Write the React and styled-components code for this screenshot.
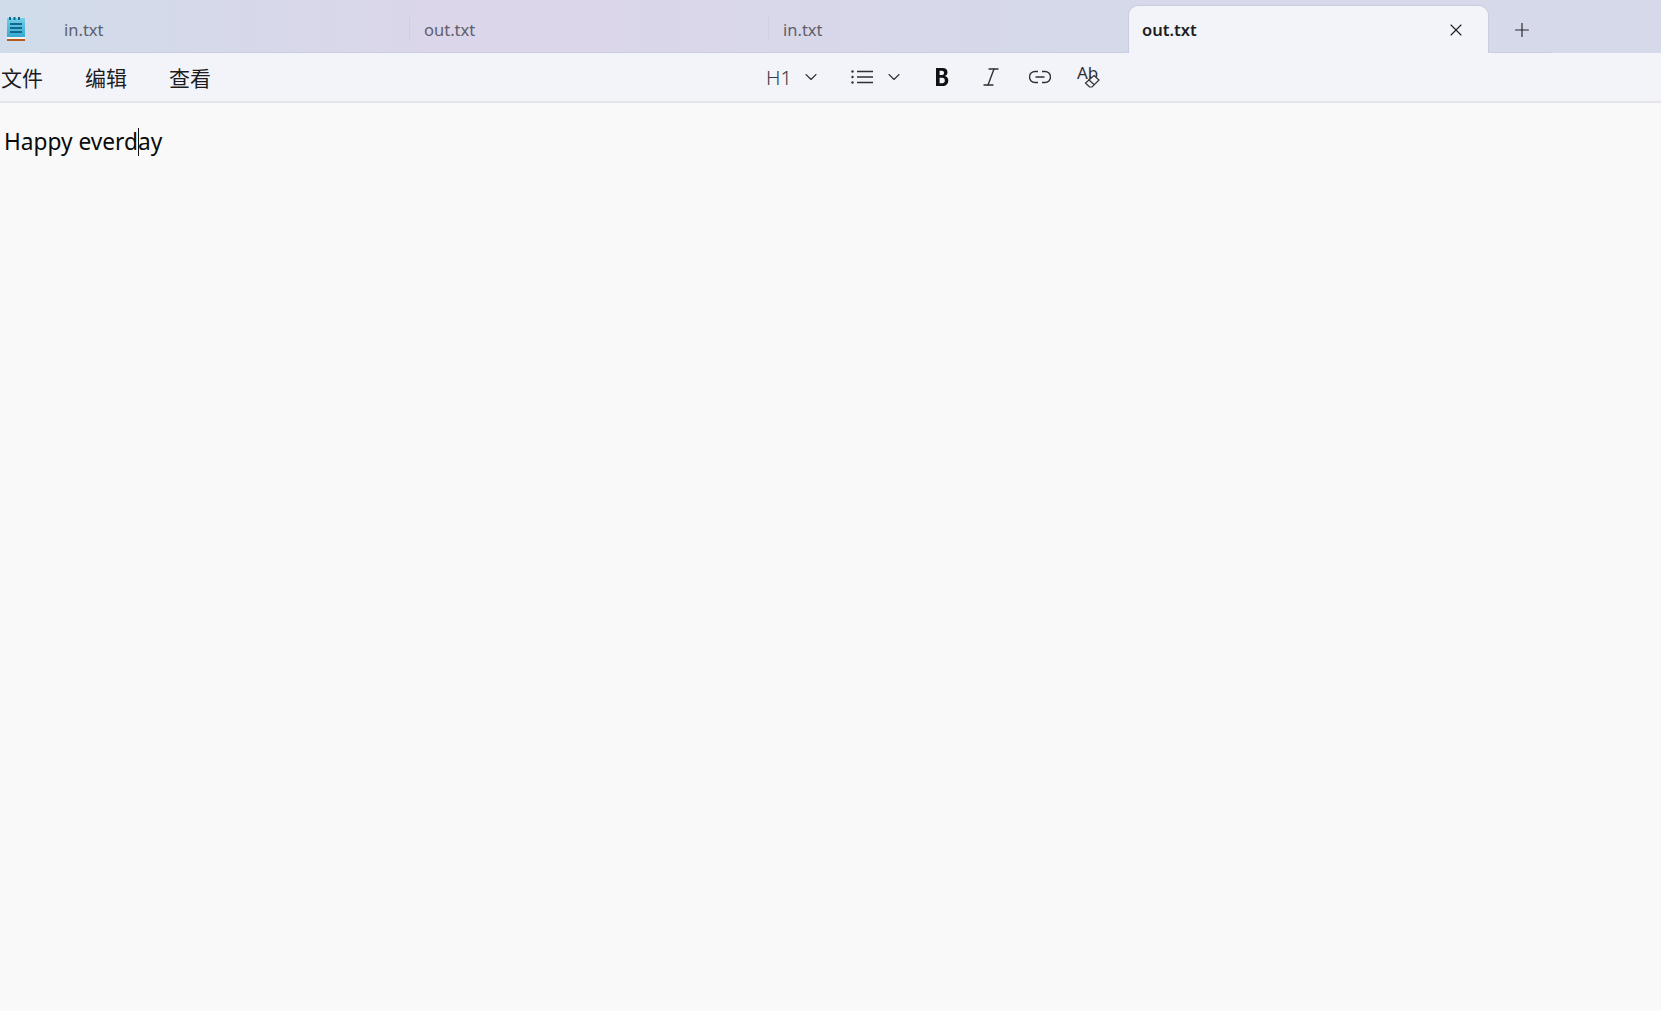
import React from 'react';
import styled, { createGlobalStyle } from 'styled-components';
import { ChevronDown, Italic, Plus, X } from 'lucide-react';

const GlobalStyle = createGlobalStyle`
  html, body, #root {
    margin: 0;
    height: 100%;
  }
  body {
    background: #f9f9f9;
    font-family: "Noto Sans", "Noto Sans CJK SC", sans-serif;
    overflow: hidden;
  }
`;

const Page = styled.div`
  display: flex;
  flex-direction: column;
  height: 100vh;
`;

const TitleBar = styled.div`
  display: flex;
  height: 53px;
  flex-shrink: 0;
  background: linear-gradient(90deg, #d0dcea 0%, #d5d9ea 12%, #dbd6ea 26%, #dbd6ea 36%, #d5d9ea 65%, #d5d9ea 100%);
`;

const AppIcon = styled.div`
  width: 40px;
  flex-shrink: 0;
  display: flex;
  padding: 17px 0 0 7px;
  box-sizing: border-box;
`;

const TabGroup = styled.div`
  display: flex;
  padding-left: 10px;
  border-bottom: 1.5px solid #c9cde2;
  border-bottom-right-radius: 5px;
`;

const Tab = styled.div`
  width: ${props => props.$width}px;
  box-sizing: border-box;
  padding: 7px 0 0 14px;
  display: flex;
  align-items: center;
  font-size: 16.5px;
  color: #5e5f6b;
  position: relative;

  &::after {
    content: '';
    display: ${props => (props.$divider ? 'block' : 'none')};
    position: absolute;
    right: 0;
    top: 17px;
    height: 24px;
    width: 1px;
    background: #cfcfe0;
  }
`;

const ActiveTab = styled.div`
  width: 359px;
  margin-top: 6px;
  box-sizing: border-box;
  padding: 0 22px 0 13px;
  display: flex;
  align-items: center;
  justify-content: space-between;
  background: #f3f4fa;
  border-radius: 9px 9px 0 0;
  box-shadow: 0 -1px 0 #c9cde2, 1px 0 0 #c9cde2, -1px 0 0 #c9cde2;
  font-size: 16.5px;
  font-weight: 600;
  color: #1d1d22;
`;

const AddArea = styled.div`
  width: 63px;
  box-sizing: border-box;
  display: flex;
  align-items: center;
  justify-content: center;
  padding: 7px 0 0 5px;
  border-bottom: 1.5px solid #c9cde2;
  border-bottom-left-radius: 5px;
  color: #2a2a2e;
`;

const Menu = styled.div`
  height: 48px;
  flex-shrink: 0;
  display: flex;
  align-items: center;
  background: #f3f4fa;
  border-bottom: 2px solid #e4e4ea;
`;

const MenuItems = styled.div`
  display: flex;
  gap: 42px;
  padding-left: 1px;
  width: 765px;
  flex-shrink: 0;
`;

const MenuItem = styled.span`
  font-size: 21px;
  color: #1d1d1f;
`;

const Tools = styled.div`
  display: flex;
  align-items: center;
  color: #303034;
`;

const ToolGroup = styled.div`
  display: flex;
  align-items: center;
  gap: ${props => props.$gap}px;
  margin-right: ${props => props.$after}px;
`;

const Heading = styled.span`
  font-size: 20px;
  font-weight: 300;
  color: #3a3a3e;
`;

const Editor = styled.div`
  flex: 1;
  background: #f9f9f9;
  padding: 23px 0 0 4px;
  font-size: 22.7px;
  line-height: 32px;
  color: #0a0a0a;
`;

const Caret = styled.span`
  display: inline-block;
  width: 1px;
  height: 28px;
  margin-right: -1px;
  vertical-align: -6px;
  background: #111;
`;

const NotepadIcon = () => (
  <svg width="20" height="26" viewBox="0 0 20 26">
    <defs>
      <linearGradient id="pad" x1="0" y1="0" x2="0" y2="1">
        <stop offset="0" stopColor="#74cfe8" />
        <stop offset="1" stopColor="#35a9d0" />
      </linearGradient>
    </defs>
    <rect x="0" y="1" width="18" height="19" fill="url(#pad)" />
    <path d="M2 0h2v3H2zM6.5 0h2v3h-2zM11 0h2v3h-2z" fill="#0e6a8c" />
    <path d="M3 6h12v2H3zM3 10h12v2H3zM3 14h12v2H3z" fill="#11698c" />
    <rect x="0" y="20" width="18" height="2" fill="#f2f2f2" />
    <rect x="0" y="22" width="18" height="2" fill="#b3591a" />
  </svg>
);

const ListIcon = () => (
  <svg width="22" height="16" viewBox="0 0 22 16" fill="none" stroke="currentColor" strokeWidth="1.3">
    <path d="M6 2.5h16M6 8h16M6 13.5h16" />
    <circle cx="1.5" cy="2.5" r="1.2" fill="currentColor" stroke="none" />
    <circle cx="1.5" cy="8" r="1.2" fill="currentColor" stroke="none" />
    <circle cx="1.5" cy="13.5" r="1.2" fill="currentColor" stroke="none" />
  </svg>
);

const BoldIcon = () => (
  <svg width="22" height="22" viewBox="-4 -2 22 22" fill="#111114" fillRule="evenodd">
    <path d="M1 0h6.5c3.1 0 5 1.6 5 4.2 0 1.9-1.1 3.3-2.8 3.9 2.2.4 3.6 2 3.6 4.4C13.3 16 11 18 7.6 18H1zM4.6 2.8v4.2h2.1c1.5 0 2.3-.8 2.3-2.1 0-1.3-.8-2.1-2.3-2.1zM4.6 9.8v5.4h2.6c1.8 0 2.6-1 2.6-2.7 0-1.7-.9-2.7-2.7-2.7z" />
  </svg>
);

const LinkIcon = () => (
  <svg width="22" height="14" viewBox="0 0 22 14" fill="none" stroke="currentColor" strokeWidth="1.4">
    <path d="M9 1.5H6a5.5 5.5 0 0 0 0 11h3M13 1.5h3a5.5 5.5 0 0 1 0 11h-3M6.5 7h9" />
  </svg>
);

const ClearFormatIcon = () => (
  <svg width="28" height="24" viewBox="0 0 28 24" fill="none" stroke="currentColor" strokeWidth="1.2">
    <text x="0" y="13.5" fontSize="17" fontFamily="Noto Sans" fill="currentColor" stroke="none">Ab</text>
    <path d="M17 10.5l5 4.5-7 7h-2.5L8.5 18z" fill="#f3f4fa" />
    <path d="M11.5 14.5l5.5 5" />
  </svg>
);

const App = () => (
  <Page>
    <GlobalStyle />
    <TitleBar>
      <AppIcon><NotepadIcon /></AppIcon>
      <TabGroup>
        <Tab $width={360} $divider>in.txt</Tab>
        <Tab $width={359} $divider>out.txt</Tab>
        <Tab $width={360}>in.txt</Tab>
      </TabGroup>
      <ActiveTab>
        out.txt
        <X size={20} strokeWidth={1.3} />
      </ActiveTab>
      <AddArea><Plus size={22} strokeWidth={1.3} /></AddArea>
    </TitleBar>
    <Menu>
      <MenuItems>
        <MenuItem>文件</MenuItem>
        <MenuItem>编辑</MenuItem>
        <MenuItem>查看</MenuItem>
      </MenuItems>
      <Tools>
        <ToolGroup $gap={9} $after={30}>
          <Heading>H1</Heading>
          <ChevronDown size={20} strokeWidth={1.3} />
        </ToolGroup>
        <ToolGroup $gap={11} $after={27}>
          <ListIcon />
          <ChevronDown size={20} strokeWidth={1.3} />
        </ToolGroup>
        <ToolGroup $gap={26} $after={0}>
          <BoldIcon />
          <Italic size={24} strokeWidth={1.4} />
          <LinkIcon />
          <ClearFormatIcon />
        </ToolGroup>
      </Tools>
    </Menu>
    <Editor>
      Happy everd<Caret />ay
    </Editor>
  </Page>
);

export default App;
